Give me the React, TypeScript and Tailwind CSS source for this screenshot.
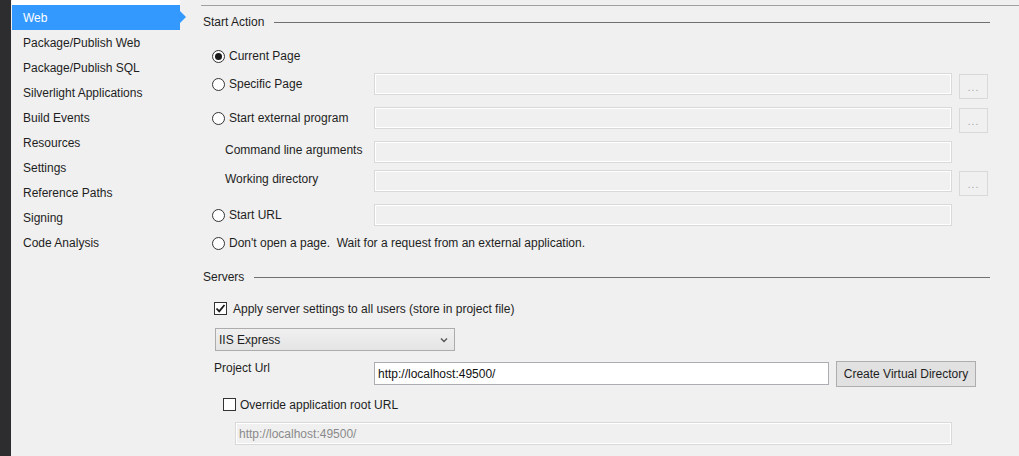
const sideItems = [
  'Package/Publish Web',
  'Package/Publish SQL',
  'Silverlight Applications',
  'Build Events',
  'Resources',
  'Settings',
  'Reference Paths',
  'Signing',
  'Code Analysis',
]

function Radio({ checked = false }: { checked?: boolean }) {
  return (
    <span className="w-[13px] h-[13px] rounded-full border border-[#333333] bg-white flex items-center justify-center shrink-0">
      {checked && <span className="w-[7px] h-[7px] rounded-full bg-[#1a1a1a]" />}
    </span>
  )
}

function Checkbox({ checked = false }: { checked?: boolean }) {
  return (
    <span className="w-[13px] h-[13px] border border-[#333333] bg-white flex items-center justify-center shrink-0">
      {checked && (
        <svg width="11" height="11" viewBox="0 0 11 11">
          <path d="M1.5 5.5 L4.2 8.3 L9.5 2" fill="none" stroke="#1a1a1a" strokeWidth="1.8" />
        </svg>
      )}
    </span>
  )
}

function DisabledInput({ className = '', text }: { className?: string; text?: string }) {
  return (
    <div
      className={`h-[22px] border border-[#d9d9d9] bg-[#f0f0f0] shadow-[inset_0_0_0_1px_#ffffff] flex items-center px-[3px] text-[#8a8a8a] ${className}`}
    >
      {text}
    </div>
  )
}

function BrowseButton() {
  return (
    <div className="mt-px w-[29px] h-[25px] border border-[#d9d9d9] bg-[#f0f0f0] flex items-end justify-center pb-[5px] text-[10px] leading-none text-[#a0a0a0] tracking-[1px]">
      ...
    </div>
  )
}

function SectionHeader({ title }: { title: string }) {
  return (
    <div className="h-[20px] mr-[29px] flex items-center gap-[10px]">
      <span className="pl-[2px]">{title}</span>
      <div className="flex-1 h-px bg-[#707070]" />
    </div>
  )
}

export default function App() {
  return (
    <div
      className="w-[1019px] h-[456px] flex bg-[#f0f0f0] text-[12px] text-[#1e1e1e] overflow-hidden"
      style={{ fontFamily: '"Liberation Sans", Arial, sans-serif' }}
    >
      {/* dark strip */}
      <div className="w-[11px] bg-[#2d2d30] shrink-0" />

      {/* Sidebar */}
      <div className="w-[169px] shrink-0 pl-px">
        <div className="h-[5px] bg-white" />
        <div className="relative h-[25px] bg-[#3399ff] text-white flex items-center pl-[11px]">
          Web
          <span className="absolute right-[-6px] top-[6px] w-0 h-0 border-y-[6px] border-y-transparent border-l-[6px] border-l-[#3399ff]" />
        </div>
        {sideItems.map((item) => (
          <div key={item} className="h-[25px] flex items-center pl-[11px]">
            {item}
          </div>
        ))}
      </div>

      {/* Main */}
      <div className="flex-1 pt-[5px]">
        <div className="ml-[21px] border-t border-[#a0a0a0]" />
        <div className="ml-[21px] mt-[6px] flex flex-col">
          <SectionHeader title="Start Action" />

          <div className="mt-[13px] h-[22px] pl-[11px] flex items-center gap-[4px]">
            <Radio checked />
            <span>Current Page</span>
          </div>

          <div className="mt-[6px] h-[26px] pl-[11px] flex items-start">
            <div className="w-[162px] h-[22px] flex items-center gap-[4px]">
              <Radio />
              <span>Specific Page</span>
            </div>
            <DisabledInput className="w-[578px]" />
            <div className="ml-[7px]">
              <BrowseButton />
            </div>
          </div>

          <div className="mt-[8px] h-[26px] pl-[11px] flex items-start">
            <div className="w-[162px] h-[22px] flex items-center gap-[4px]">
              <Radio />
              <span>Start external program</span>
            </div>
            <DisabledInput className="w-[578px]" />
            <div className="ml-[7px]">
              <BrowseButton />
            </div>
          </div>

          <div className="mt-[8px] h-[22px] pl-[11px] flex items-start">
            <div className="w-[162px] h-[18px] flex items-center pl-[13px]">Command line arguments</div>
            <DisabledInput className="w-[578px]" />
          </div>

          <div className="mt-[7px] h-[26px] pl-[11px] flex items-start">
            <div className="w-[162px] h-[18px] flex items-center pl-[13px]">Working directory</div>
            <DisabledInput className="w-[578px]" />
            <div className="ml-[7px]">
              <BrowseButton />
            </div>
          </div>

          <div className="mt-[8px] h-[22px] pl-[11px] flex items-start">
            <div className="w-[162px] h-[22px] flex items-center gap-[4px]">
              <Radio />
              <span>Start URL</span>
            </div>
            <DisabledInput className="w-[578px]" />
          </div>

          <div className="mt-[6px] h-[22px] pl-[11px] flex items-center gap-[4px]">
            <Radio />
            <span className="whitespace-pre">Don't open a page.  Wait for a request from an external application.</span>
          </div>

          <div className="mt-[13px]">
            <SectionHeader title="Servers" />
          </div>

          <div className="mt-[11px] h-[21px] pl-[13px] flex items-center gap-[6px]">
            <Checkbox checked />
            <span>Apply server settings to all users (store in project file)</span>
          </div>

          <div className="mt-[9px] ml-[14px] w-[240px] h-[23px] border border-[#acacac] bg-gradient-to-b from-[#f0f0f0] to-[#e5e5e5] flex items-center justify-between pl-[3px] pr-[6px]">
            <span>IIS Express</span>
            <svg width="8" height="6" viewBox="0 0 8 6">
              <path d="M1 1.5 L4 4.5 L7 1.5" fill="none" stroke="#555555" strokeWidth="1.4" />
            </svg>
          </div>

          <div className="mt-[10px] h-[26px] pl-[13px] flex items-start">
            <div className="w-[160px] leading-[14px]">Project Url</div>
            <div className="mt-px w-[455px] h-[23px] border border-[#abadb3] bg-white flex items-center px-[3px] text-[#111111]">
              http://localhost:49500/
            </div>
            <div className="ml-[7px] w-[140px] h-[26px] border border-[#adadad] bg-[#e1e1e1] flex items-center justify-center">
              Create Virtual Directory
            </div>
          </div>

          <div className="mt-[7px] h-[21px] pl-[22px] flex items-center gap-[4px]">
            <Checkbox />
            <span>Override application root URL</span>
          </div>

          <div className="mt-[7px] ml-[34px]">
            <DisabledInput className="w-[717px] h-[23px]" text="http://localhost:49500/" />
          </div>
        </div>
      </div>
    </div>
  )
}
